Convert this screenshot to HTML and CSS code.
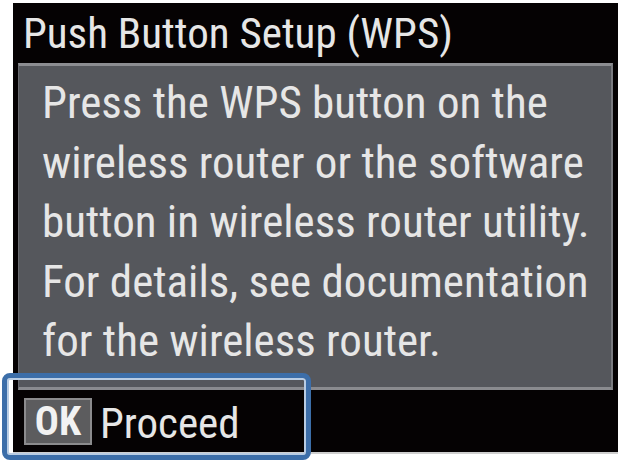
FILE: index.html
```html
<!DOCTYPE html>
<html lang="en">
<head>
<meta charset="utf-8">
<title>Push Button Setup (WPS)</title>
<link rel="stylesheet" href="styles.css">
</head>
<body>
<div class="page">
  <div class="screen">
    <div class="title">Push Button Setup (WPS)</div>
    <div class="panel">
      <div class="line">Press the WPS button on the</div>
      <div class="line">wireless router or the software</div>
      <div class="line">button in wireless router utility.</div>
      <div class="line">For details, see documentation</div>
      <div class="line">for the wireless router.</div>
    </div>
    <div class="footer">
      <span class="key">OK</span>
      <span class="action">Proceed</span>
    </div>
  </div>
  <div class="focus"></div>
</div>
</body>
</html>
```
FILE: styles.css
```css
html, body {
  margin: 0;
  padding: 0;
  background: #ffffff;
}
.page {
  position: relative;
  width: 618px;
  height: 462px;
  overflow: hidden;
}
.screen {
  margin: 3px 0 0 13px;
  width: 605px;
  height: 449px;
  background: #050203;
  border-bottom: 2px solid #cfcfcf;
  display: flex;
  flex-direction: column;
  font-family: "Roboto", "Liberation Sans", sans-serif;
  font-stretch: condensed;
  color: #e6e6e6;
}
.title {
  height: 60px;
  line-height: 60px;
  font-size: 43px;
  padding-left: 10px;
  white-space: nowrap;
}
.panel {
  margin-left: 5px;
  width: 595px;
  height: 327px;
  box-sizing: border-box;
  background: #55575c;
  border-top: 3px solid #8c8d91;
  border-bottom: 3px solid #8a8b8f;
  border-left: 1px solid #6a6b70;
  border-right: 2px solid #7a7b80;
  padding: 7px 0 0 23px;
}
.line {
  font-size: 45px;
  line-height: 59.5px;
  white-space: nowrap;
}
.footer {
  flex: 1;
  display: flex;
  align-items: center;
  gap: 8px;
  padding-left: 11px;
}
.key {
  width: 68px;
  height: 47px;
  box-sizing: border-box;
  background: #5c5c5e;
  border: 2px solid #8b8b8d;
  display: flex;
  align-items: center;
  justify-content: center;
  font-size: 40px;
  font-weight: 700;
  color: #f2f2f2;
}
.action {
  font-size: 43px;
  line-height: 47px;
  padding-top: 4px;
}
.focus {
  position: absolute;
  left: 2px;
  top: 373px;
  width: 309px;
  height: 87px;
  box-sizing: border-box;
  border: 5px solid #3c6ea9;
  border-radius: 8px;
  box-shadow: inset 0 0 0 2px #b9cde4;
}
```
